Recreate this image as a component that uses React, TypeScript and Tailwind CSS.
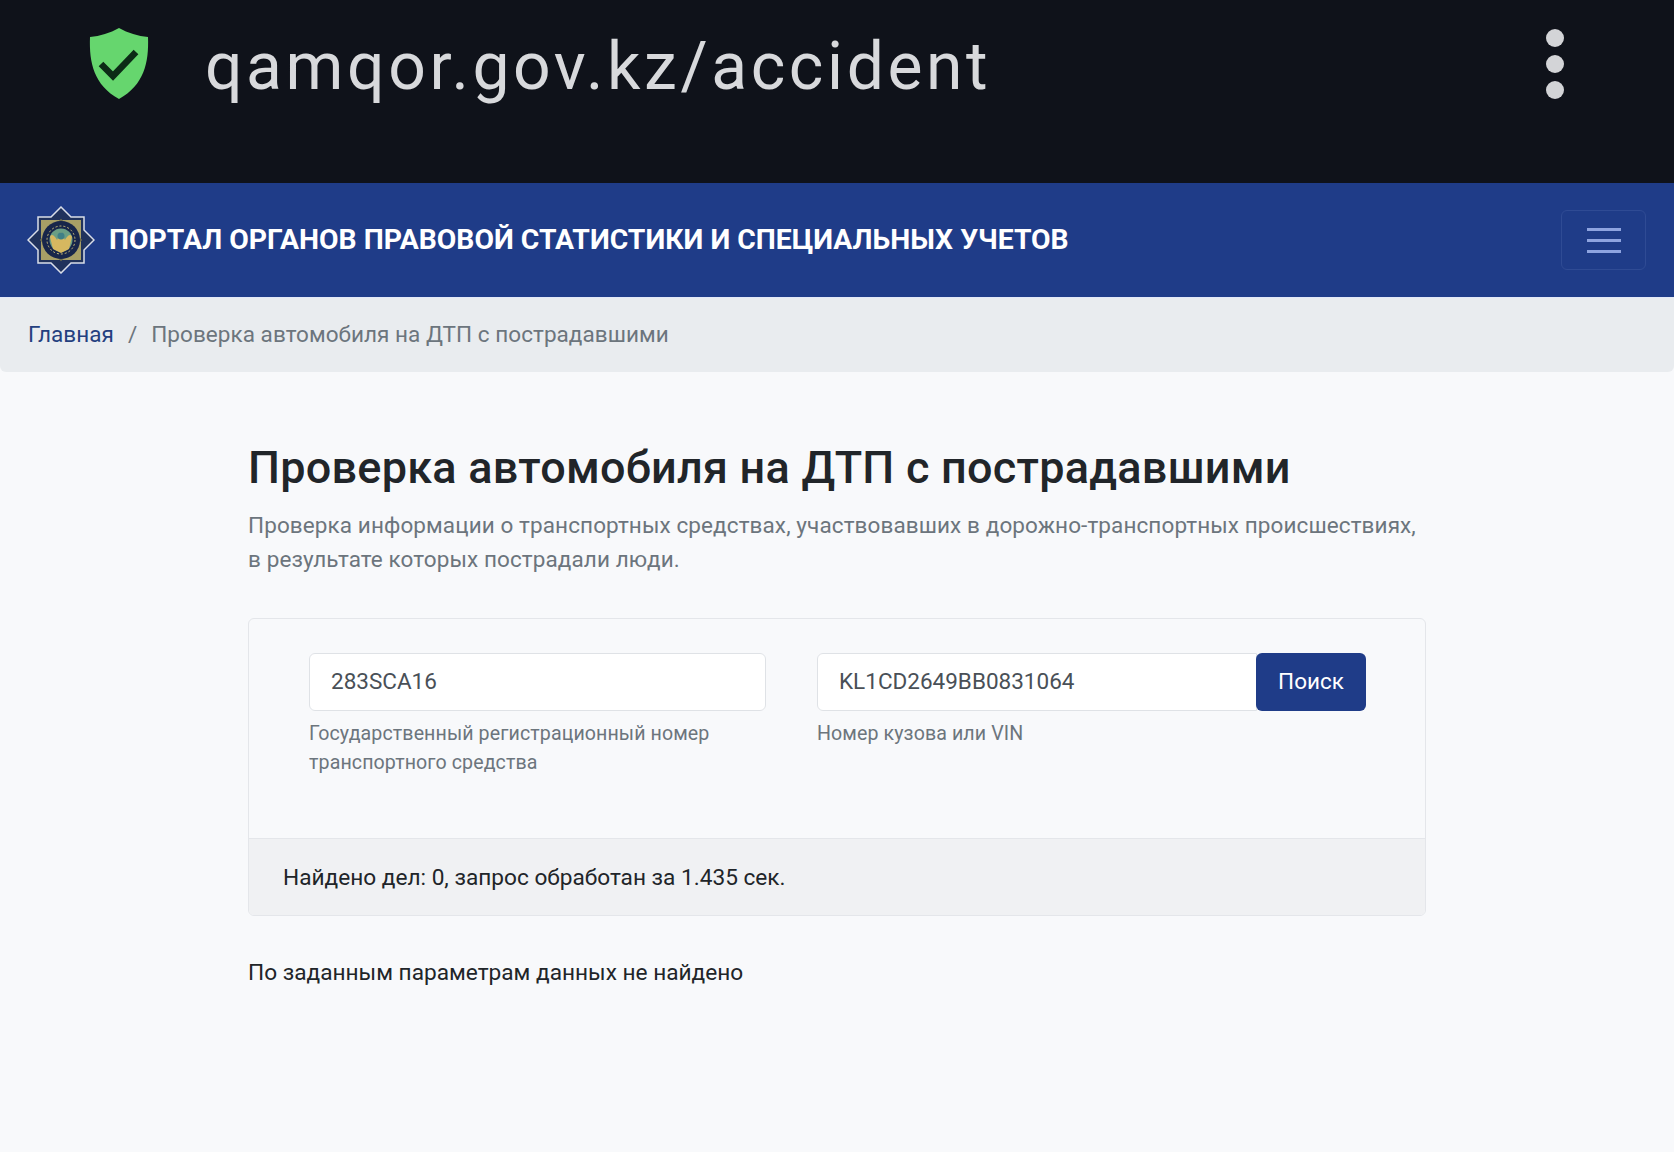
export default function App() {
  const ff = "font-['Roboto',sans-serif]";
  return (
    <div className={`${ff} min-h-[1152px] w-full bg-[#f8f9fb] flex flex-col`}>
      <div className="h-[183px] bg-[#0f121a] flex items-start pl-[88px] pr-[110px] pt-[27px]">
        <svg width="62" height="74" viewBox="0 0 62 74" className="mr-[55px] shrink-0">
          <path d="M31 1 C40 6 50 9 60 10 C61 36 56 58 31 72 C6 58 1 36 2 10 C12 9 22 6 31 1 Z" fill="#66d66e" />
          <path d="M13 37 L25 49 L48 25" fill="none" stroke="#0c2b16" strokeWidth="6.5" />
        </svg>
        <div className="text-[66px] leading-[76px] mt-[2px] tracking-[3.6px] font-normal text-[#d8d9dc]">qamqor.gov.kz/accident</div>
        <div className="ml-auto flex flex-col gap-[8px] pt-[2px]">
          <span className="block w-[18px] h-[18px] rounded-full bg-[#d3d4d7]" />
          <span className="block w-[18px] h-[18px] rounded-full bg-[#d3d4d7]" />
          <span className="block w-[18px] h-[18px] rounded-full bg-[#d3d4d7]" />
        </div>
      </div>

      <div className="h-[114px] bg-[#1f3c88] flex items-center pl-[27px] pr-[28px]">
        <svg width="68" height="68" viewBox="0 0 68 68" className="mr-[14px] shrink-0">
          <path d="M34 1 L44 11 L57 11 L57 24 L67 34 L57 44 L57 57 L44 57 L34 67 L24 57 L11 57 L11 44 L1 34 L11 24 L11 11 L24 11 Z" fill="#20325c" stroke="#d9dee8" strokeWidth="1.5" />
          <rect x="14" y="14" width="40" height="40" fill="#a89f66" />
          <rect x="19" y="19" width="30" height="30" fill="#6f6d4c" transform="rotate(45 34 34)" />
          <circle cx="34" cy="34" r="19" fill="#18264a" />
          <circle cx="34" cy="34" r="14" fill="none" stroke="#c9bd7a" strokeWidth="1" strokeDasharray="2 2" />
          <circle cx="34" cy="34" r="11.5" fill="#6a9e84" />
          <path d="M23 31 C25 26 29 32 30 34 L34 26 L38 34 C39 32 43 26 45 31 L42 43 L34 47 L26 43 Z" fill="#d6b860" />
          <circle cx="34" cy="30" r="3.5" fill="#3f7f86" />
        </svg>
        <div className="text-[28.33px] leading-[34px] font-bold text-white">ПОРТАЛ ОРГАНОВ ПРАВОВОЙ СТАТИСТИКИ И СПЕЦИАЛЬНЫХ УЧЕТОВ</div>
        <div className="ml-auto w-[85px] h-[60px] rounded-[6px] border border-[#2f4b94] flex flex-col items-center justify-center gap-[8px]">
          <span className="block w-[34px] h-[3px] bg-[#8ea4e0]" />
          <span className="block w-[34px] h-[3px] bg-[#8ea4e0]" />
          <span className="block w-[34px] h-[3px] bg-[#8ea4e0]" />
        </div>
      </div>

      <div className="h-[75px] bg-[#e9ecef] border-t border-[#e2e8f8] rounded-b-[6px] flex items-center pl-[28px] text-[22.5px] tracking-[0.05px]">
        <span className="text-[#24407f]">Главная</span>
        <span className="text-[#6c757d] mx-[14px]">/</span>
        <span className="text-[#6c757d]">Проверка автомобиля на ДТП с пострадавшими</span>
      </div>

      <div className="w-[1178px] mx-auto pt-[68px]">
        <h1 className="text-[45px] leading-[56px] font-medium text-[#212529] tracking-[0.25px]">Проверка автомобиля на ДТП с пострадавшими</h1>
        <p className="mt-[12px] text-[22.5px] leading-[34px] text-[#6c757d] tracking-[0.1px]">
          Проверка информации о транспортных средствах, участвовавших в дорожно-транспортных происшествиях,<br />в результате которых пострадали люди.
        </p>

        <div className="mt-[42px] h-[298px] border border-[#e4e6ea] rounded-[6px] bg-[#f8f9fb] flex flex-col overflow-hidden">
          <div className="flex-1 flex pl-[60px] pt-[34px]">
            <div className="w-[457px] mr-[51px]">
              <div className="h-[58px] bg-white border border-[#dfe2e6] rounded-[6px] flex items-center pl-[21px] text-[22.5px] text-[#495057]">283SCA16</div>
              <div className="mt-[8px] text-[19.6px] leading-[29px] text-[#6c757d] tracking-[0.1px]">Государственный регистрационный номер<br />транспортного средства</div>
            </div>
            <div className="w-[549px]">
              <div className="flex h-[58px]">
                <div className="flex-1 bg-white border border-[#dfe2e6] rounded-l-[6px] flex items-center pl-[21px] text-[22.5px] text-[#495057]">KL1CD2649BB0831064</div>
                <button className="w-[110px] -ml-[1px] bg-[#1f3c88] rounded-[6px] text-white text-[22.5px]">Поиск</button>
              </div>
              <div className="mt-[8px] text-[19.6px] leading-[29px] text-[#6c757d] tracking-[0.1px]">Номер кузова или VIN</div>
            </div>
          </div>
          <div className="h-[77px] bg-[#f0f1f3] border-t border-[#e4e6ea] flex items-center pl-[34px] pt-[2px] text-[22.65px] text-[#212529]">Найдено дел: 0, запрос обработан за 1.435 сек.</div>
        </div>

        <p className="mt-[40px] text-[22.65px] leading-[34px] text-[#212529]">По заданным параметрам данных не найдено</p>
      </div>
    </div>
  );
}
